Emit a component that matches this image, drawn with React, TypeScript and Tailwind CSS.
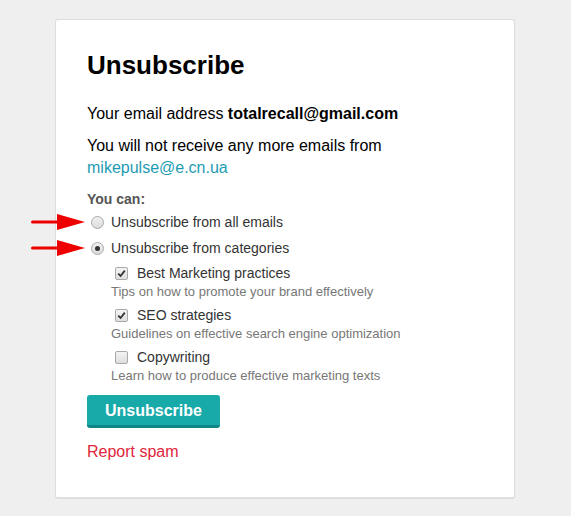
import React from "react";

function Arrow() {
  return (
    <svg width="56" height="18" viewBox="0 0 56 18" className="block">
      <rect x="0" y="7.5" width="32" height="3" fill="#ee0000" rx="1.5" />
      <polygon points="26,1 54,9 26,17" fill="#ee0000" />
    </svg>
  );
}

function Radio({ checked }: { checked?: boolean }) {
  return (
    <span className="w-[13px] h-[13px] rounded-full border border-[#a9a9a9] bg-gradient-to-b from-[#f0f0f0] to-[#dcdcdc] flex items-center justify-center shrink-0">
      {checked && <span className="w-[5px] h-[5px] rounded-full bg-[#333]" />}
    </span>
  );
}

function Check({ checked }: { checked?: boolean }) {
  return (
    <span className="w-[13px] h-[13px] rounded-[2px] border border-[#a9a9a9] bg-gradient-to-b from-[#f4f4f4] to-[#dedede] flex items-center justify-center shrink-0">
      {checked && (
        <svg width="9" height="9" viewBox="0 0 9 9">
          <path d="M1.2 4.6 L3.6 7 L7.8 1.6" stroke="#333" strokeWidth="1.8" fill="none" />
        </svg>
      )}
    </span>
  );
}

const cats = [
  { t: "Best Marketing practices", d: "Tips on how to promote your brand effectively", c: true },
  { t: "SEO strategies", d: "Guidelines on effective search engine optimization", c: true },
  { t: "Copywriting", d: "Learn how to produce effective marketing texts", c: false },
];

export default function App() {
  return (
    <div className="min-h-[516px] bg-[#efefef] pt-[19px] pl-[55px] font-['Liberation_Sans',Arial,sans-serif] relative">
      <div className="w-[460px] h-[480px] bg-white border border-[#dcdcdc] border-b-2 border-b-[#dedede] rounded-[3px] pl-[31px] pt-[30px]">
        <h1 className="text-[26px] leading-[30px] font-bold text-black">Unsubscribe</h1>
        <p className="mt-[23px] text-[16px] leading-[22px] text-black">
          Your email address <b>totalrecall@gmail.com</b>
        </p>
        <p className="mt-[10px] text-[16px] leading-[22px] text-black">
          You will not receive any more emails from
          <br />
          <span className="text-[#1d9bb2]">mikepulse@e.cn.ua</span>
        </p>
        <div className="mt-[10px] text-[14px] leading-[20px] font-bold text-[#555]">You can:</div>
        <div className="flex flex-col">
          <div className="h-[26px] flex items-center gap-[7px] pl-[4px] text-[14px] text-[#333] relative">
            <div className="absolute left-[-56px] top-[4px]"><Arrow /></div>
            <Radio />
            <span>Unsubscribe from all emails</span>
          </div>
          <div className="h-[26px] flex items-center gap-[7px] pl-[4px] text-[14px] text-[#333] relative">
            <div className="absolute left-[-56px] top-[4px]"><Arrow /></div>
            <Radio checked />
            <span>Unsubscribe from categories</span>
          </div>
        </div>
        <div className="mt-[2px] pl-[24px] flex flex-col gap-[4px]">
          {cats.map((c) => (
            <div key={c.t}>
              <div className="h-[20px] flex items-center gap-[9px] pl-[4px] text-[14px] text-[#333]">
                <Check checked={c.c} />
                <span>{c.t}</span>
              </div>
              <div className="text-[13px] leading-[18px] text-[#777]">{c.d}</div>
            </div>
          ))}
        </div>
        <button className="mt-[10px] w-[133px] h-[33px] rounded-[3px] bg-[#17aaa9] border-b-[3px] border-b-[#0f8584] text-white font-bold text-[16px] flex items-center justify-center pt-[1px]">
          Unsubscribe
        </button>
        <div className="mt-[13px] text-[16px] leading-[22px] text-[#e0243a]">Report spam</div>
      </div>
    </div>
  );
}
